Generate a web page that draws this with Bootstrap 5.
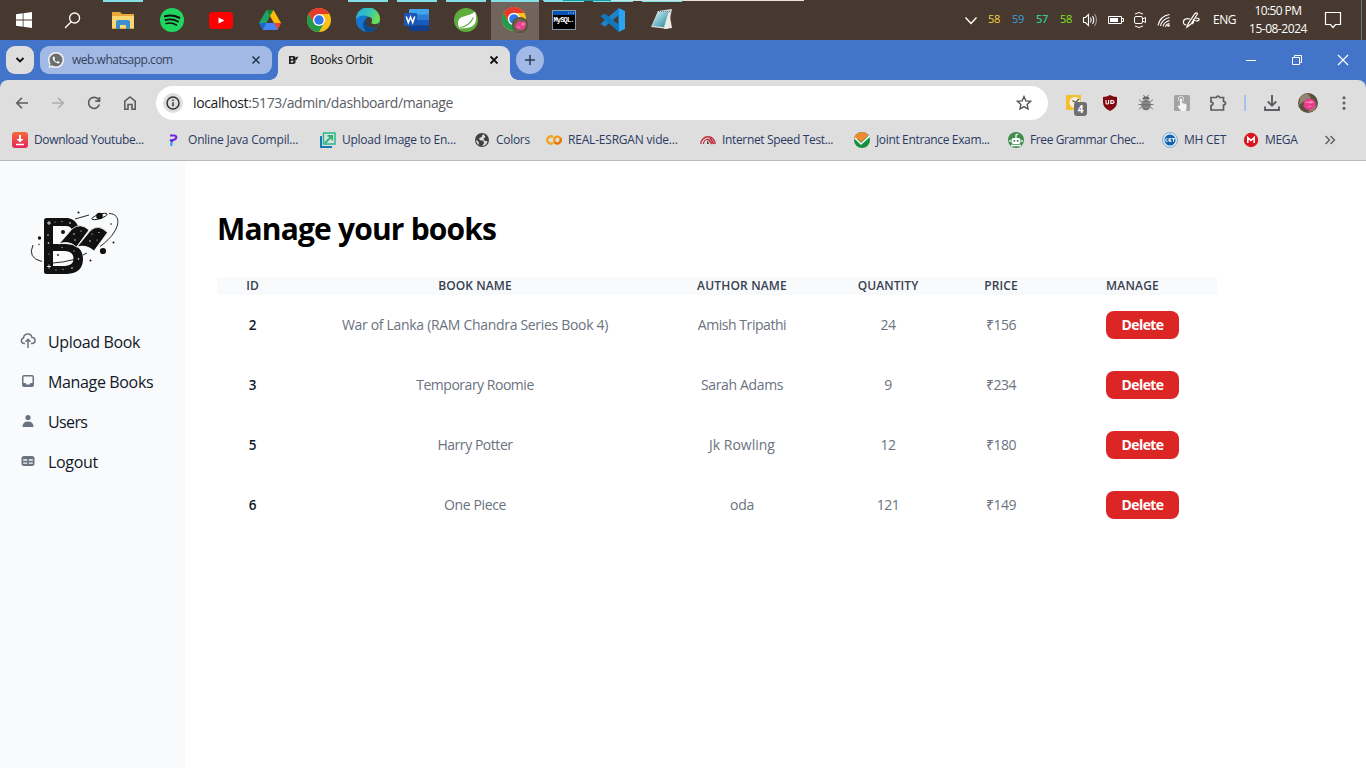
<!DOCTYPE html>
<html lang="en">
<head>
<meta charset="utf-8">
<meta name="viewport" content="width=device-width, initial-scale=1">
<title>Books Orbit</title>
<link href="https://cdn.jsdelivr.net/npm/bootstrap@5.3.0/dist/css/bootstrap.min.css" rel="stylesheet">
<style>
body{width:1366px;height:768px;overflow:hidden;font-family:"Open Sans","Noto Sans",sans-serif;font-size:12px;line-height:16px;color:#000;background:#fff}
svg{display:block;flex:none}
.taskbar{height:40px;background:#483930;color:#fff}
.slot{width:49px;height:40px;position:relative}
.slot.w48{width:48px}
.slot.w50{width:50px;padding-right:2px}
.open::before{content:"";position:absolute;top:0;left:5px;width:40px;height:2px;background:#84dfe4}
.current{background:#70645d;margin-left:1px}
.current::before{left:0;width:48px}
.stack-edge{position:absolute;top:0;left:543px;width:261px;height:1px;background:linear-gradient(90deg,#84dfe4 20px,#109ea8 20px 68px,#c6e6e6 68px 140px,#e9e3dd 140px)}
.tray>*{flex:none}
.num{width:24px;text-align:center;font-size:11px;letter-spacing:-.4px;padding-bottom:2px}
.tray svg{margin:0 auto}
.clock{width:66px;text-align:center;line-height:18px;font-size:12px}
.titlebar{height:40px;background:#4274ca}
.pillbtn{width:28px;height:28px;border-radius:9px;background:#dedede}
.tab-idle{width:232px;height:28px;border-radius:9px;background:#a1b9e4;color:#35435c}
.tab-live{width:232px;height:34px;border-radius:9px 9px 0 0;background:#dedede;color:#111;position:relative}
.tab-live::before,.tab-live::after{content:"";position:absolute;bottom:0;width:8px;height:8px}
.tab-live::before{left:-8px;background:radial-gradient(circle at 0 0,transparent 7.5px,#dedede 8px)}
.tab-live::after{right:-8px;background:radial-gradient(circle at 100% 0,transparent 7.5px,#dedede 8px)}
.toolbar-wrap{background:#4274ca}
.toolbar{height:81px;background:#dedede;border-radius:8px 8px 0 0;border-bottom:1px solid #b9b9b9}
.tslot{width:36px;height:36px;flex:none;position:relative}
.omnibox{width:892px;height:34px;border-radius:17px;background:#fff}
.url{font-size:14px;color:#5c6065}
.url b{font-weight:400;color:#1c1c1c}
.infobtn{width:20px;height:20px;border-radius:50%;background:#dedede}
.bm{width:154px;color:#2b3a63;flex:none;white-space:nowrap}
.bm svg{margin-right:6px}
.w72{width:72px}.w81{width:81px}
.count{position:absolute;left:18px;top:17px;width:13px;height:14px;border-radius:3px;background:#6d6f73;color:#fff;font-size:10px;font-weight:700;line-height:14px;text-align:center}
.page{height:607px}
.side{width:185px;background:#f9fafb;flex:none;border-radius:3px 3px 0 0}
.side a{height:40px;color:#111827;font-size:16px;text-decoration:none;white-space:nowrap}
.side a span{padding-top:1px}
h1{font-size:30px;font-weight:700;line-height:36px;margin:0;color:#000;letter-spacing:-.82px}
.books{width:1000px;table-layout:fixed;border-collapse:collapse}
.books th,.books td{padding:0;text-align:center;white-space:nowrap}
.books thead th{height:18px;line-height:18px;background:#f9fafb;color:#374151;font-size:12px;font-weight:600;letter-spacing:.08px}
.books tbody td{height:60px;font-size:14px;color:#6b7280;letter-spacing:-.45px}
.books tbody td:first-child{color:#111827;font-weight:600;font-size:13.5px}
.books tbody td:last-child{text-align:left;padding-left:58px}
.del{width:73px;height:28px;padding:0;background:#dc2626;color:#fff;border:0;border-radius:8px;font-size:14px;font-weight:700;line-height:28px;display:block;text-align:center;letter-spacing:-.6px}
.k0{letter-spacing:0!important}
.k2{letter-spacing:-.2px!important}
.k25{letter-spacing:-.25px!important}
.k3{letter-spacing:-.31px!important}
.k35{letter-spacing:-.35px!important}
.k4{letter-spacing:-.39px!important}
.k5{letter-spacing:-.48px!important}
.k6{letter-spacing:-.62px!important}
</style>
</head>
<body>
<header class="taskbar d-flex align-items-center position-relative">
  <div class="slot w48 d-flex align-items-center justify-content-center"><svg width="16" height="16" viewBox="0 0 16 16" fill="#fff"><path d="M0 2.2 6.700 1.300V7.600H0zM7.500 1.200 16 0V7.600H7.500zM0 8.400H6.700V14.700L0 13.800zM7.500 8.400H16V16L7.500 14.800z"/></svg></div>
  <div class="slot w50 d-flex align-items-center justify-content-center"><svg width="17" height="17" viewBox="0 0 17 17" fill="none" stroke="#fff" stroke-width="1.300"><circle cx="10.600" cy="6" r="5"/><path d="M7.200 9.800 1 16"/></svg></div>
  <div class="slot open d-flex align-items-center justify-content-center"><svg width="22" height="19" viewBox="0 0 22 19"><path d="M0 1h8l2 2h12v15H0z" fill="#e9a93a"/><path d="M0 5h22v12H0z" fill="#fbd774"/><path d="M4 18v-7q0-2 2-2h10q2 0 2 2v7h-4v-4H8v4z" fill="#3c8fce"/><path d="M0 17h4v1H0zM18 17h4v1h-4z" fill="#e2a53a"/></svg></div>
  <div class="slot d-flex align-items-center justify-content-center"><svg width="24" height="24" viewBox="0 0 24 24"><circle cx="12" cy="12" r="12" fill="#1fd660"/><g fill="none" stroke="#111" stroke-linecap="round"><path d="M5 8.200q7.500-2 14.300 1.600" stroke-width="2.200"/><path d="M5.500 12q6.800-1.800 12.500 1.500" stroke-width="1.900"/><path d="M6 15.500q5.500-1.500 10.500 1.500" stroke-width="1.500"/></g></svg></div>
  <div class="slot d-flex align-items-center justify-content-center"><svg width="24" height="17" viewBox="0 0 24 17"><rect width="24" height="17" rx="4" fill="#f00"/><path d="M9.500 5.500v6l6-3z" fill="#fff"/></svg></div>
  <div class="slot d-flex align-items-center justify-content-center"><svg width="22" height="20" viewBox="0 0 22 20"><path d="M7.500 0h7L22 13h-7z" fill="#fbbc04"/><path d="M7.500 0 11 6 4 19.500 0 13z" fill="#1fa463"/><path d="M7.300 13H22l-3.500 7H3.500z" fill="#4285f4"/><path d="M15 13h7l-3.500 6.500z" fill="#ea4335"/><path d="m7.300 13-3.600 6.500L0 13z" fill="#1967d2"/><path d="m7.500 0 3.500 6 3.500-6z" fill="#188038"/></svg></div>
  <div class="slot d-flex align-items-center justify-content-center"><svg width="24" height="24" viewBox="0 0 24 24"><circle cx="12" cy="12" r="12" fill="#fbc116"/><path d="M1.600 6A12 12 0 0 1 22.400 6H12z" fill="#e33b2e"/><path d="M1.600 6A12 12 0 0 0 12 24l5.200-9H6.800z" fill="#229a4b"/><path d="M12 6 6.800 15 1.600 6z" fill="#e33b2e"/><path d="M1.600 6 6.800 15 9 20z" fill="#229a4b"/><circle cx="12" cy="12" r="6" fill="#fff"/><circle cx="12" cy="12" r="4.700" fill="#2f77e8"/></svg></div>
  <div class="slot open d-flex align-items-center justify-content-center"><svg width="24" height="24" viewBox="0 0 24 24"><defs><linearGradient id="eg" x2="1" y2=".4"><stop stop-color="#2aa6e0"/><stop offset=".6" stop-color="#37c6b5"/><stop offset="1" stop-color="#6fdc52"/></linearGradient></defs><circle cx="12" cy="12" r="12" fill="#1476cf"/><path d="M0 11A12 12 0 0 1 24 11.500C24 16 19 17.500 15 15.500q1.500-2 .5-4.500C13 6.500 4 6 0 11z" fill="url(#eg)"/><path d="M11.500 9q4.500-.5 4.500 3 0 1.500-1 3 2.500 2 7 .5l1-1-1 4.500C14 21.500 9 18 9 13.500q.5-3 2.500-4.500z" fill="#483930"/><path d="M10 10.500Q9 20 17.300 20q3 0 4.700-1.300A12 12 0 0 1 10 23.800Q4 16 10 10.500z" fill="#114a8b"/></svg></div>
  <div class="slot open d-flex align-items-center justify-content-center"><svg width="25" height="22" viewBox="0 0 25 22"><path d="M6 0h18q1 0 1 1v5H5V1q0-1 1-1z" fill="#41a5ee"/><path d="M5 5.500h20V11H5z" fill="#2b7cd3"/><path d="M5 11h20v5.500H5z" fill="#185abd"/><path d="M5 16.500h20V21q0 1-1 1H6q-1 0-1-1z" fill="#103f91"/><rect y="4" width="13" height="13" rx="1" fill="#1b56b4"/><path d="M2.300 7.500 4.300 13.500 6.500 8l2.200 5.500 2-6" fill="none" stroke="#fff" stroke-width="1.500"/></svg></div>
  <div class="slot open d-flex align-items-center justify-content-center"><svg width="24" height="24" viewBox="0 0 24 24"><circle cx="12" cy="12" r="12" fill="#5fad3c"/><path d="M21 3.500q2.500 8-.5 12.500c-3 4.500-9 4-14.500 4.500Q3 17 4.500 12.500C6.500 7 15 9 21 3.500z" fill="#fff"/><path d="M6 19.500q9-1 13.500-10" fill="none" stroke="#5fad3c" stroke-width="1.200"/></svg></div>
  <div class="slot w48 open current d-flex align-items-center justify-content-center"><svg width="26" height="26" viewBox="0 0 26 26"><circle cx="12" cy="12" r="12" fill="#fbc116"/><path d="M1.600 6A12 12 0 0 1 22.400 6H12z" fill="#e33b2e"/><path d="M1.600 6A12 12 0 0 0 12 24l5.200-9H6.800z" fill="#229a4b"/><path d="M12 6 6.800 15 1.600 6z" fill="#e33b2e"/><circle cx="12" cy="12" r="6.200" fill="#fff"/><circle cx="12" cy="12" r="4.800" fill="#2f77e8"/><circle cx="18" cy="18" r="8" fill="#54513c"/><path d="M13 14q3-5 8-2l4 5-3 7-8 1-3-6z" fill="#7b6a50" opacity=".7"/><path d="m14 17 3-3 3 1 3-1 1 3-1 4-4 2-4-1-2-3z" fill="#ec3f92"/><circle cx="21" cy="17" r="1.600" fill="#f884b8"/><circle cx="16.500" cy="20" r="1.500" fill="#e866a4"/></svg></div>
  <div class="slot open d-flex align-items-center justify-content-center"><svg width="24" height="20" viewBox="0 0 24 20"><rect width="24" height="20" fill="#8a98ad"/><rect x="1" y="1" width="22" height="4" fill="#0752b5"/><rect x="1" y="5" width="22" height="14" fill="#000"/><path d="M16 3h1M18.500 3h1M21 3h1" stroke="#b5d3ff"/><text x="1.500" y="11.500" font-family="Liberation Mono,monospace" font-size="7" font-weight="700" fill="#fff" textLength="21">MySQL.</text></svg></div>
  <div class="slot open d-flex align-items-center justify-content-center"><svg width="24" height="24" viewBox="0 0 24 24"><path d="M17.500 0 24 3v18l-6.500 3z" fill="#2ba3f0"/><path d="M18 0v7L4 18.500 1 17q-2-1 0-2.500z" fill="#1a86d2"/><path d="M18 24v-7L4 5.500 1 7q-2 1 0 2.500z" fill="#1278bd"/></svg></div>
  <div class="slot open d-flex align-items-center justify-content-center"><svg width="24" height="24" viewBox="0 0 24 24"><defs><linearGradient id="np" x2="1" y2="1"><stop stop-color="#e9f7f8"/><stop offset=".6" stop-color="#67b5c4"/><stop offset="1" stop-color="#2c7d95"/></linearGradient></defs><path d="M8 3 22 1 18 21 1 19z" fill="#d5d8d7"/><path d="m8 4 11-1-5 16-12-1z" fill="url(#np)"/><path d="m19 3 3 17-8 1z" fill="#eceae4"/><path d="M7 3.500h14" stroke="#777" stroke-dasharray="1 1"/></svg></div>
  <div class="stack-edge"></div>
  <div class="tray d-flex align-items-center ms-auto h-100">
    <svg width="24" height="24" viewBox="0 0 24 24" fill="none" stroke="#fff" stroke-width="1.400"><path d="m7.500 9.500 5.500 6 5.500-6"/></svg>
    <div class="num" style="color:#f0d338">58</div><div class="num" style="color:#3c9edc">59</div><div class="num" style="color:#2ce5a3">57</div><div class="num" style="color:#7de51f">58</div>
    <svg width="24" height="24" viewBox="0 0 24 24" fill="none" stroke="#fff" stroke-width="1.100"><path d="M5.500 9.500h2l3-3v11l-3-3h-2zM12.500 9.500q1.500 2.500 0 5M14.500 8q2.500 4 0 8"/><path d="M16.500 6q4 6 0 12" stroke="#a09893"/></svg>
    <svg width="26" height="24" viewBox="0 0 26 24"><path d="M6.500 8.500h13v7h-13zM20 10.500h1.500v3H20" fill="none" stroke="#fff"/><path d="M8 10h8v4H8z" fill="#fff"/></svg>
    <svg width="23" height="24" viewBox="0 0 23 24" fill="none" stroke="#fff"><rect x="6.500" y="8.500" width="8" height="7" rx="1.500"/><path d="m14.500 11 3-1.500v5l-3-1.500M7 6q4-3 8 0M7 18q4 3 8 0"/></svg>
    <svg width="27" height="24" viewBox="0 0 27 24" fill="none" stroke="#fff" stroke-width="1.100"><path d="M7 17.500Q9 8 18.500 6.500M9.500 18Q11 11 18.500 9.500M12 18.500Q13 14 18.500 12.500M14.500 19q.5-3 4-3.500"/><circle cx="17.500" cy="17.500" r="1.300" fill="#fff" stroke="none"/></svg>
    <svg width="26" height="24" viewBox="0 0 26 24" fill="none" stroke="#fff" stroke-width="1.200"><path d="m9 19 1.500-4 6.500-9.500q2-1.500 2.500.5L13 16zM12 11q-5-1.500-6.500 2-.5 4 3 4M17.500 10q4.500 0 3.500 2-2 2-5.500 0 .5 2.500-1.500 4"/></svg>
    <div class="text-center" style="width:41px"><span class="k5">ENG</span></div>
    <div class="clock"><span class="k6">10:50 PM</span><br><span class="k5">15-08-2024</span></div>
    <svg width="44" height="24" viewBox="0 0 44 24" fill="none" stroke="#fff" stroke-width="1.200"><path d="M14.500 4.500h15v12h-5l-2.500 3-2.500-3h-5z"/></svg>
    <div class="border-start h-100 border-secondary" style="width:5px;margin-left:6px"></div>
  </div>
</header>

<div class="titlebar d-flex align-items-start pt-1">
  <div class="d-flex w-100 align-items-start" style="padding:2px 0 0 6px">
    <button class="pillbtn border-0 p-0 d-flex align-items-center justify-content-center"><svg width="10" height="8" viewBox="0 0 10 8" fill="none" stroke="#111" stroke-width="1.900"><path d="m1.500 2 3.500 3.500L8.500 2"/></svg></button>
    <div class="tab-idle d-flex align-items-center" style="margin-left:6px;padding:0 11px 0 8px">
      <svg width="16" height="16" viewBox="0 0 16 16"><circle cx="8" cy="8" r="8" fill="#f3f3f3"/><path d="M.5 15.800 2 11l4 4z" fill="#f3f3f3"/><circle cx="8" cy="8" r="6.500" fill="#6d6d6d"/><path d="m2 14 1-4 3 3z" fill="#6d6d6d"/><path d="M5.500 4.500Q4 5.500 5 8q2 3 5 3.500 1.500 0 1.700-1.500L9.800 9l-1 1Q7 9 6.300 7.500l.7-1-.7-2z" fill="#fff"/></svg>
      <span class="ms-2 k5">web.whatsapp.com</span>
      <svg class="ms-auto" width="10" height="10" viewBox="0 0 10 10" stroke="#27344d" stroke-width="1.500"><path d="m1.500 1.500 7 7M8.500 1.500l-7 7"/></svg>
    </div>
    <div class="tab-live d-flex align-items-center" style="margin-left:6px;padding:0 11px 6px 10px">
      <svg width="12" height="12" viewBox="0 0 12 12" fill="#222"><path d="M1 2h4.500Q7.500 2.200 7.500 4 7.500 5 6.500 5.700 8 6.300 7.700 8 7.300 10 5.500 10H1zM2.800 3.500v1.800H5V3.500zm0 3.200v1.800h2.500V6.700z" fill-rule="evenodd"/><path d="m6 6 2-3 2.500-.5L8.500 6z"/></svg>
      <span class="k3" style="margin-left:10px">Books Orbit</span>
      <svg class="ms-auto" width="10" height="10" viewBox="0 0 10 10" stroke="#111" stroke-width="1.800"><path d="m1.500 1.500 7 7M8.500 1.500l-7 7"/></svg>
    </div>
    <button class="pillbtn border-0 p-0 rounded-circle d-flex align-items-center justify-content-center" style="margin-left:6px;background:#a1b9e4"><svg width="12" height="12" viewBox="0 0 12 12" stroke="#2b3a52" stroke-width="1.500"><path d="M6 1v10M1 6h10"/></svg></button>
    <div class="ms-auto d-flex" style="margin-top:8px;padding-right:17px;gap:34px">
      <svg width="12" height="12" viewBox="0 0 12 12" stroke="#fff"><path d="M1 6.500h10"/></svg>
      <svg width="12" height="12" viewBox="0 0 12 12" stroke="#fff" fill="none"><path d="M1.500 3.500h7v7h-7zM3.500 3.500v-2h7v7h-2"/></svg>
      <svg width="12" height="12" viewBox="0 0 12 12" stroke="#fff" stroke-width="1.200"><path d="m1 1 10 10M11 1 1 11"/></svg>
    </div>
  </div>
</div>

<div class="toolbar-wrap"><div class="toolbar">
  <div class="d-flex align-items-center" style="height:46px;padding-left:4px">
    <div class="tslot d-flex align-items-center justify-content-center"><svg width="14" height="14" viewBox="0 0 14 14" fill="none" stroke="#5a5d61" stroke-width="1.600"><path d="M13 7H1.800M7 1.800 1.800 7 7 12.200"/></svg></div>
    <div class="tslot d-flex align-items-center justify-content-center"><svg width="14" height="14" viewBox="0 0 14 14" fill="none" stroke="#acadaf" stroke-width="1.600"><path d="M1 7h11.200M7 1.800 12.200 7 7 12.200"/></svg></div>
    <div class="tslot d-flex align-items-center justify-content-center"><svg width="14" height="14" viewBox="0 0 14 14" fill="none" stroke="#5a5d61" stroke-width="1.700"><path d="M12.300 8.500A5.500 5.500 0 1 1 11 3l1.500 1.500M12.500 1v4.200H8.300"/></svg></div>
    <div class="tslot d-flex align-items-center justify-content-center"><svg width="14" height="16" viewBox="0 0 14 16" fill="none" stroke="#5a5d61" stroke-width="1.600"><path d="M1.800 6.200 7 2l5.200 4.200v8H9V9.500H5v4.700H1.800z"/></svg></div>
    <div class="omnibox d-flex align-items-center" style="margin-left:8px;padding:0 16px 0 7px">
      <div class="infobtn d-flex align-items-center justify-content-center"><svg width="14" height="14" viewBox="0 0 14 14" fill="none" stroke="#333" stroke-width="1.500"><circle cx="7" cy="7" r="6"/><path d="M7 6.200v4M7 3.500v1.600"/></svg></div>
      <span class="url k4" style="margin-left:10px"><b>localhost</b>:5173/admin/dashboard/manage</span>
      <svg class="ms-auto" width="16" height="16" viewBox="0 0 16 16" fill="none" stroke="#505358" stroke-width="1.300"><path d="m8 1.500 1.900 4.300 4.700.5-3.500 3.100 1 4.600L8 11.600 3.900 14l1-4.600L1.400 6.300l4.700-.5z"/></svg>
    </div>
    <div class="tslot d-flex align-items-center justify-content-center" style="margin-left:8px"><svg width="16" height="16" viewBox="0 0 16 16"><rect width="15" height="15" y="0" fill="#f3c02f"/><circle cx="9" cy="7.500" r="5.500" fill="#f6efdb"/><path d="m6.500 5.500 3 2L13 4" fill="none" stroke="#554" stroke-width="1.300"/></svg><span class="count">4</span></div>
    <div class="tslot d-flex align-items-center justify-content-center"><svg width="14" height="16" viewBox="0 0 14 16"><path d="M7 0q3 1.800 7 2v5q0 6-7 9-7-3-7-9V2q4-.2 7-2z" fill="#800610"/><path d="M3 5v2.700q0 1.300 1.300 1.300t1.300-1.300V5M7.800 5.600v2.800q3.200.2 3.200-1.400T7.800 5.600z" fill="none" stroke="#fff" stroke-width="1.100"/></svg></div>
    <div class="tslot d-flex align-items-center justify-content-center"><svg width="16" height="16" viewBox="0 0 16 16"><path d="M1 4.500 4 7M15 4.500 12 7M.5 9.500h15M1 14.500 4 11.500M15 14.500 12 11.500M5.500 0 7 2.500M10.500 0 9 2.500" stroke="#777" fill="none"/><ellipse cx="8" cy="10" rx="4.800" ry="5.300" fill="#777"/><path d="M4.500 4.500q0-3 3.500-3t3.500 3z" fill="#666"/><path d="M3 8h10M3.500 12h9" stroke="#a5a5a5" stroke-width=".7"/></svg></div>
    <div class="tslot d-flex align-items-center justify-content-center"><svg width="16" height="16" viewBox="0 0 16 16"><rect width="16" height="16" rx="1.500" fill="#a2a3a4"/><path d="M6 11V4q1-1.500 2 0v4l4 1q1 .5.500 3L12 16H7L3.500 11.500q.5-1.500 2.500-.5z" fill="#f4f4f4"/><circle cx="7" cy="4" r="2.700" fill="none" stroke="#ddd"/></svg></div>
    <div class="tslot d-flex align-items-center justify-content-center"><svg width="18" height="18" viewBox="0 0 18 18" fill="none" stroke="#5a5d61" stroke-width="1.700"><path d="M2 3.500h5.500q.2-1.500 1.500-1.500t1.500 1.500H14.500v4q2 .2 2 1.800t-2 1.700v5H2v-4.500q2-.3 2-1.800T2 8z"/></svg></div>
    <div class="d-flex justify-content-center" style="width:18px"><div style="width:2px;height:16px;background:#a4c3f3"></div></div>
    <div class="tslot d-flex align-items-center justify-content-center"><svg width="16" height="16" viewBox="0 0 16 16" fill="none" stroke="#5a5d61" stroke-width="1.900"><path d="M8 0v10.500M3.800 6.500 8 10.700l4.200-4.200M1 11.500V15h14v-3.500"/></svg></div>
    <div class="tslot d-flex align-items-center justify-content-center"><svg width="20" height="20" viewBox="0 0 20 20"><circle cx="10" cy="10" r="10" fill="#58513f"/><path d="M2 5q4-5 8-4l3 4-8 4-4 3zM13 15l6-3-3 6-6 1z" fill="#94836e"/><path d="m6 9 2-3 4-.5 3 1 3 3.500-1.500 4.500-4 2.500-4-.5-3-3z" fill="#ea3d8c"/><path d="M7 10q2-3 4-1 2-3 5 1-2-1-3 1-2-2-6-1zM9 14q3-2 5 0" fill="#f785b6"/></svg></div>
    <div class="tslot d-flex align-items-center justify-content-center"><svg width="4" height="16" viewBox="0 0 4 16" fill="#5a5d61"><circle cx="2" cy="2.800" r="1.500"/><circle cx="2" cy="8" r="1.500"/><circle cx="2" cy="13.200" r="1.500"/></svg></div>
  </div>
  <div class="d-flex align-items-center" style="height:28px;padding-left:12px">
    <div class="bm d-flex align-items-center"><svg width="16" height="16" viewBox="0 0 16 16"><defs><linearGradient id="dl" x2="0" y2="1"><stop stop-color="#f4693b"/><stop offset="1" stop-color="#e5255b"/></linearGradient></defs><rect width="16" height="16" rx="3" fill="url(#dl)"/><path d="M7 3h2v4h2.500L8 10.500 4.500 7H7z" fill="#fff"/><path d="M4 12.500h8" stroke="#fff" stroke-width="1.500"/></svg><span class="k35">Download Youtube...</span></div>
    <div class="bm d-flex align-items-center"><svg width="16" height="16" viewBox="0 0 16 16" fill="none" stroke-width="2.200"><path d="M4 3.500h4.500q3 1 1 3.500L6 8.500" stroke="#7a22e8"/><path d="M7 8q-2.500 2.500-1.500 6" stroke="#3aa0f5"/><path d="m4 8 3 1" stroke="#5a18d8"/></svg><span class="k2">Online Java Compil...</span></div>
    <div class="bm d-flex align-items-center"><svg width="16" height="16" viewBox="0 0 16 16" fill="none"><path d="M1 4v11h11" stroke="#1878b0" stroke-width="2"/><rect x="3.500" y="1" width="11.500" height="11" stroke="#25b990" stroke-width="1.500"/><path d="m5 11 7-7M7.500 3.800h4.700v4.700" stroke="#27b56e" stroke-width="1.800"/></svg><span class="k25">Upload Image to En...</span></div>
    <div class="bm w72 d-flex align-items-center"><svg width="16" height="16" viewBox="0 0 16 16"><circle cx="8" cy="8" r="7" fill="#3f4245"/><path d="M9.500 2.200q-2 .8-1.500 2.500l-3 1.500 1 2 3.500.5.500 2.500-2 3q5-1 5.500-5l-3-.5-1-2 2-2zM2.200 7.500l2.500 2.500.5 3Q2 11 2.200 7.500z" fill="#dedede"/></svg><span class="k3">Colors</span></div>
    <div class="bm d-flex align-items-center"><svg width="16" height="16" viewBox="0 0 16 16" fill="none" stroke-width="2.300"><circle cx="11.500" cy="8" r="3.400" stroke="#f19a16"/><path d="M7 5.300A3.500 3.500 0 1 0 7 10.700" stroke="#f3a61b"/><path d="M8.500 10A3.500 3.500 0 0 0 14.500 6.500" stroke="#e37712"/></svg><span class="k2">REAL-ESRGAN vide...</span></div>
    <div class="bm d-flex align-items-center"><svg width="16" height="16" viewBox="0 0 16 16" fill="none" stroke="#c22d3c"><path d="M.8 12A7.200 7.200 0 0 1 15.200 12" stroke-width="1.400"/><path d="M3.500 12A4.800 4.800 0 0 1 8 7.200" stroke-width="1.200"/><path d="m8 7 4 5M10 6l4 6" stroke-width="1.500"/><path d="m7 12 .5-4 1.500 4z" fill="#333" stroke="none"/></svg><span class="k35">Internet Speed Test...</span></div>
    <div class="bm d-flex align-items-center"><svg width="16" height="16" viewBox="0 0 16 16"><circle cx="8" cy="8" r="8" fill="#14913e"/><path d="M0 8A8 8 0 0 1 14.500 3.500L7 10 4 7z" fill="#ef8a2e"/><path d="m1 6 6 6 8.500-8" fill="none" stroke="#fff" stroke-width="1.600"/></svg><span class="k35">Joint Entrance Exam...</span></div>
    <div class="bm d-flex align-items-center"><svg width="16" height="16" viewBox="0 0 16 16"><circle cx="8" cy="8" r="8" fill="#3f8e50"/><rect x="3.500" y="6" width="9" height="6" rx="2" fill="#fff"/><path d="M8 6V3l2-1M3 13.500h10M2 8v2M14 8v2" stroke="#fff" fill="none" stroke-width="1.300"/><path d="M5.500 8h1.700v1.700H5.500zM8.800 8h1.700v1.700H8.800z" fill="#3f8e50"/></svg><span class="k4">Free Grammar Chec...</span></div>
    <div class="bm w81 d-flex align-items-center"><svg width="16" height="16" viewBox="0 0 16 16"><circle cx="8" cy="8" r="7.500" fill="#dbe9f4" stroke="#7cb1da"/><circle cx="8" cy="8" r="5.500" fill="#1662aa"/><path d="M5.500 6.700q-2 .2-2 1.500t2 1.300M9.500 6.700H7v2.600h2.500M7 8h2M10 6.700h3M11.500 7v2.500" stroke="#fff" fill="none"/></svg><span class="k25">MH CET</span></div>
    <div class="bm w81 d-flex align-items-center"><svg width="16" height="16" viewBox="0 0 16 16"><circle cx="8" cy="8" r="7.200" fill="#d9161f"/><path d="M4.800 11V5.500L8 8.500l3.200-3V11" fill="none" stroke="#fff" stroke-width="1.600"/></svg><span class="k35">MEGA</span></div>
    <svg width="12" height="10" viewBox="0 0 12 10" fill="none" stroke="#5a5d61" stroke-width="1.400"><path d="m1.500 1 4 4-4 4M6.500 1l4 4-4 4"/></svg>
  </div>
</div></div>

<div class="page d-flex">
  <nav class="side">
    <svg style="margin:45px 0 0 24px" width="104" height="76" viewBox="24 206 104 76">
      <path fill="#111" fill-rule="evenodd" d="M46.500 218H68q7 1 10 8l-6 4q-1-4-6-4H53V244H66q17 1 17 15t-16 15H46.500q-2.500 0-2.500-2.500v-51q0-2.500 2.500-2.500zM53 251v15h12q8.500-.5 8.500-7.500T65 251z"/>
      <g fill="#111" stroke="#f9fafb" stroke-width=".8">
        <path d="M59 244 72 229q8-7 17 1L76.500 247q-8-7-17.500-3z"/><path d="M77 247 90 231q8-8 17.500 1.500L94 251q-8-7-17-4z"/>
      </g>
      <g fill="#111"><circle cx="99.500" cy="216" r="3.300"/><circle cx="103" cy="251" r="3.100"/><circle cx="63" cy="232" r="2"/><circle cx="39.500" cy="238" r="1.700"/><circle cx="78.500" cy="212.500" r="1"/><circle cx="90.500" cy="260.500" r="1"/><circle cx="113.500" cy="242.500" r="1"/><circle cx="111" cy="224" r=".8"/><circle cx="58" cy="255" r=".9"/><circle cx="39" cy="244.500" r=".7"/></g>
      <path d="M53 263q10-.5 21-3.500M83 255l4-2M75 219l14-4M33 245q-6 13 9 16.500M109 213.500c13 0 13 17-9 33" fill="none" stroke="#111" stroke-width=".9"/>
      <ellipse cx="99.500" cy="216.500" rx="8" ry="2.100" transform="rotate(-18 99.500 216.500)" fill="none" stroke="#111" stroke-width=".9"/>
      <path d="M47 223h4M49 221v4M47 266.500h4M49 264.500v4" stroke="#fff" stroke-width=".8"/>
      <g fill="#fff"><circle cx="55" cy="222" r=".5"/><circle cx="62" cy="221.500" r=".5"/><circle cx="70" cy="223" r=".8"/><circle cx="48" cy="235" r=".7"/><circle cx="48.500" cy="243" r=".8"/><circle cx="49" cy="254" r=".5"/><circle cx="56" cy="270" r=".5"/><circle cx="63" cy="269.500" r=".5"/><circle cx="72" cy="268" r=".8"/><circle cx="78.500" cy="259" r=".8"/><circle cx="74" cy="251" r=".6"/><circle cx="62" cy="247.500" r=".5"/><circle cx="74" cy="234" r=".7"/><circle cx="81" cy="231" r=".6"/><circle cx="75" cy="240" r=".7"/><circle cx="92" cy="234" r=".6"/><circle cx="99" cy="232.500" r=".6"/><circle cx="90" cy="241" r=".7"/><circle cx="97" cy="240" r=".5"/></g>
    </svg>
    <div style="padding:39px 0 0 20px">
      <a href="#" class="d-flex align-items-center"><svg width="16" height="16" viewBox="0 0 16 16" fill="none" stroke="#6b7280" stroke-width="1.500"><path d="M5 10.500H4A2.800 2.800 0 0 1 3.500 5 4.300 4.300 0 0 1 12 4.500 3 3 0 0 1 12 10.500H11M8 15V6.500M5.500 8.800 8 6.300l2.500 2.500"/></svg><span class="k35" style="margin-left:12px">Upload Book</span></a>
      <a href="#" class="d-flex align-items-center"><svg width="16" height="16" viewBox="0 0 16 16"><path fill="#6b7280" fill-rule="evenodd" d="M4 2h8q2 0 2 2v8q0 2-2 2H4q-2 0-2-2V4q0-2 2-2zm-.5 1.500v6.500h2l1 1.500h3l1-1.500h2V3.500z"/></svg><span class="k35" style="margin-left:12px">Manage Books</span></a>
      <a href="#" class="d-flex align-items-center"><svg width="16" height="16" viewBox="0 0 16 16" fill="#6b7280"><circle cx="8" cy="4.500" r="2.600"/><path d="M2.500 14q0-5.500 5.500-5.500t5.500 5.500z"/></svg><span class="k6" style="margin-left:12px">Users</span></a>
      <a href="#" class="d-flex align-items-center"><svg width="16" height="16" viewBox="0 0 16 16"><path fill="#6b7280" fill-rule="evenodd" d="M4 3h8q2.500 0 2.500 2.500v5Q14.500 13 12 13H4q-2.500 0-2.500-2.500v-5Q1.500 3 4 3zM3.200 6.200v1.600h4V6.200zm5.600 0v1.600h4V6.200zM3.200 9.500v1.300h4V9.500zm5.600 0v1.300h4V9.500z"/></svg><span class="k3" style="margin-left:12px">Logout</span></a>
    </div>
  </nav>
  <main style="padding:50px 0 0 32px">
    <h1>Manage your books</h1>
    <table class="books" style="margin-top:30px">
      <colgroup><col style="width:71px"><col style="width:374px"><col style="width:160px"><col style="width:132px"><col style="width:94px"><col style="width:169px"></colgroup>
      <thead><tr><th>ID</th><th>BOOK NAME</th><th><span style="letter-spacing:.18px">AUTHOR NAME</span></th><th>QUANTITY</th><th>PRICE</th><th><span style="letter-spacing:.2px">MANAGE</span></th></tr></thead>
      <tbody>
        <tr><td>2</td><td><span class="k3">War of Lanka (RAM Chandra Series Book 4)</span></td><td>Amish Tripathi</td><td>24</td><td>₹156</td><td><button class="del">Delete</button></td></tr>
        <tr><td>3</td><td><span class="k5">Temporary Roomie</span></td><td><span class="k35">Sarah Adams</span></td><td>9</td><td>₹234</td><td><button class="del">Delete</button></td></tr>
        <tr><td>5</td><td>Harry Potter</td><td><span class="k0">Jk Rowling</span></td><td>12</td><td>₹180</td><td><button class="del">Delete</button></td></tr>
        <tr><td>6</td><td><span class="k35">One Piece</span></td><td><span class="k25">oda</span></td><td>121</td><td>₹149</td><td><button class="del">Delete</button></td></tr>
      </tbody>
    </table>
  </main>
</div>
<script src="https://cdn.jsdelivr.net/npm/bootstrap@5.3.0/dist/js/bootstrap.bundle.min.js"></script>
</body>
</html>
